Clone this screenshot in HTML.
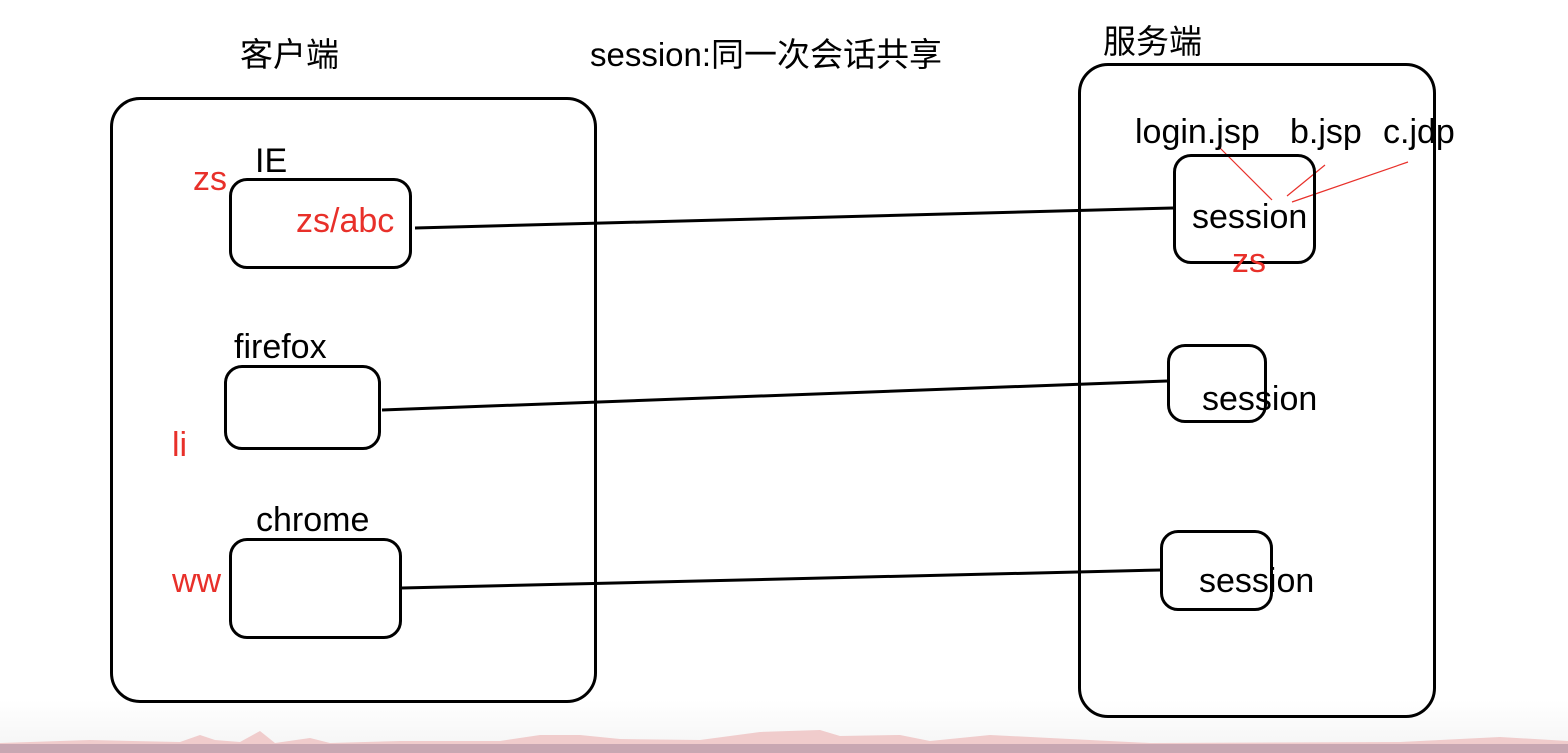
<!DOCTYPE html>
<html><head><meta charset="utf-8"><style>
body{margin:0;width:1568px;height:753px;overflow:hidden;background:#fff;position:relative;font-family:"Liberation Sans","Noto Sans CJK SC",sans-serif}
.t{position:absolute;font-size:34px;color:#000;white-space:nowrap;line-height:1}
.r{color:#e8302a}
.b{position:absolute;border:3px solid #000;border-radius:18px;box-sizing:border-box}
</style></head><body>
<div style="position:absolute;left:0;top:700px;width:1568px;height:53px;background:linear-gradient(#fff,#f4f4f4)"></div>
<svg style="position:absolute;left:0;top:0" width="1568" height="753">
<path d="M0 743 L90 740 L180 742 L200 735 L215 740 L240 742 L260 731 L275 743 L310 738 L330 743 L400 741 L500 741 L540 735 L580 735 L620 739 L700 740 L760 732 L820 730 L840 736 L900 735 L930 741 L990 735 L1050 738 L1150 743 L1400 742 L1500 737 L1568 741 L1568 744 L0 744Z" fill="#f0cccc"/>
<rect x="0" y="744" width="1568" height="9" fill="#c8a7b2"/>
<g stroke="#000" stroke-width="3" fill="none">
<line x1="415" y1="228" x2="1173" y2="208"/>
<line x1="382" y1="410" x2="1167" y2="381"/>
<line x1="402" y1="588" x2="1161" y2="570"/>
</g>
<g stroke="#e8302a" stroke-width="1.2" fill="none">
<line x1="1218" y1="146" x2="1272" y2="200"/>
<line x1="1325" y1="165" x2="1287" y2="196"/>
<line x1="1408" y1="162" x2="1292" y2="202"/>
</g>
</svg>
<div class="b" style="left:110px;top:97px;width:487px;height:606px;border-radius:30px"></div>
<div class="b" style="left:1078px;top:63px;width:358px;height:655px;border-radius:30px"></div>
<div class="b" style="left:229px;top:178px;width:183px;height:91px"></div>
<div class="b" style="left:224px;top:365px;width:157px;height:85px"></div>
<div class="b" style="left:229px;top:538px;width:173px;height:101px"></div>
<div class="b" style="left:1173px;top:154px;width:143px;height:110px"></div>
<div class="b" style="left:1167px;top:344px;width:100px;height:79px"></div>
<div class="b" style="left:1160px;top:530px;width:113px;height:81px"></div>
<div class="t" style="left:240px;top:38px;font-size:33px">客户端</div>
<div class="t" style="left:590px;top:38px;font-size:33px">session:同一次会话共享</div>
<div class="t" style="left:1103px;top:25px;font-size:33px">服务端</div>
<div class="t" style="left:255px;top:144px">IE</div>
<div class="t r" style="left:193px;top:162px">zs</div>
<div class="t r" style="left:296px;top:204px">zs/abc</div>
<div class="t" style="left:234px;top:330px">firefox</div>
<div class="t r" style="left:172px;top:428px">li</div>
<div class="t" style="left:256px;top:503px">chrome</div>
<div class="t r" style="left:172px;top:564px">ww</div>
<div class="t" style="left:1135px;top:115px">login.jsp</div>
<div class="t" style="left:1290px;top:115px">b.jsp</div>
<div class="t" style="left:1383px;top:115px">c.jdp</div>
<div class="t" style="left:1192px;top:200px">session</div>
<div class="t r" style="left:1232px;top:244px">zs</div>
<div class="t" style="left:1202px;top:382px">session</div>
<div class="t" style="left:1199px;top:564px">session</div>
</body></html>
